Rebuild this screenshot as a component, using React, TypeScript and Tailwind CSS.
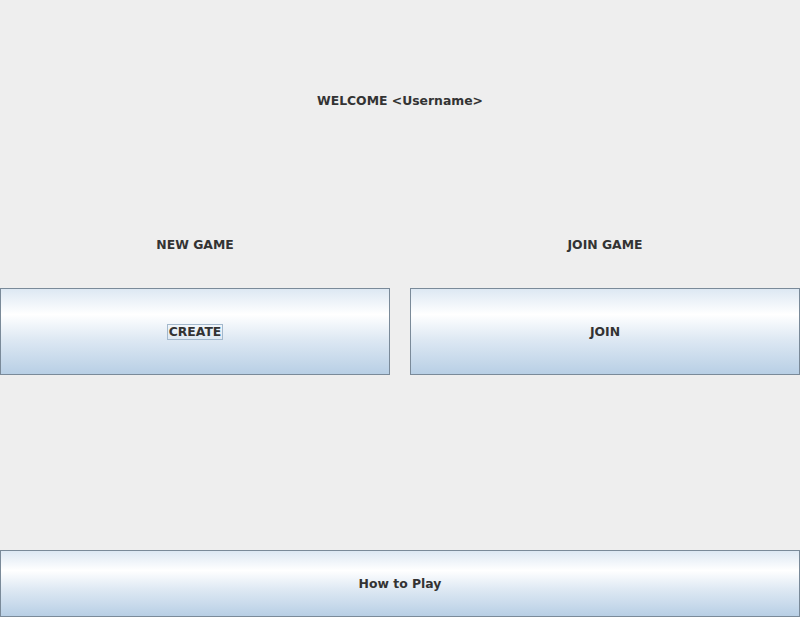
import React from 'react';

const btn =
  'flex items-center justify-center border border-[#7a8a99] bg-[linear-gradient(to_bottom,#dde8f3_0%,#ffffff_30%,#dde8f3_60%,#b8cfe5_100%)] text-[12.4px] font-bold text-[#333333]';

export default function App() {
  return (
    <div className="w-[800px] h-[617px] bg-[#eeeeee] flex flex-col font-['DejaVu_Sans',sans-serif] text-[12.4px] font-bold text-[#333333] overflow-hidden">
      {/* Header */}
      <div className="h-[200px] flex items-center justify-center pt-[2px]">
        <span>WELCOME &lt;Username&gt;</span>
      </div>

      {/* Labels */}
      <div className="grid grid-cols-2 gap-[20px] h-[88px] pt-[2px]">
        <div className="flex items-center justify-center">NEW GAME</div>
        <div className="flex items-center justify-center">JOIN GAME</div>
      </div>

      {/* Buttons */}
      <div className="grid grid-cols-2 gap-[20px] h-[87px]">
        <button className={btn}>
          <span className="border border-[#a3b8cc] px-[1px] leading-[14px]">CREATE</span>
        </button>
        <button className={`${btn} pt-[2px]`}>JOIN</button>
      </div>

      <div className="flex-1" />

      <button className={`${btn} h-[67px] w-full pt-[2px]`}>How to Play</button>
    </div>
  );
}
